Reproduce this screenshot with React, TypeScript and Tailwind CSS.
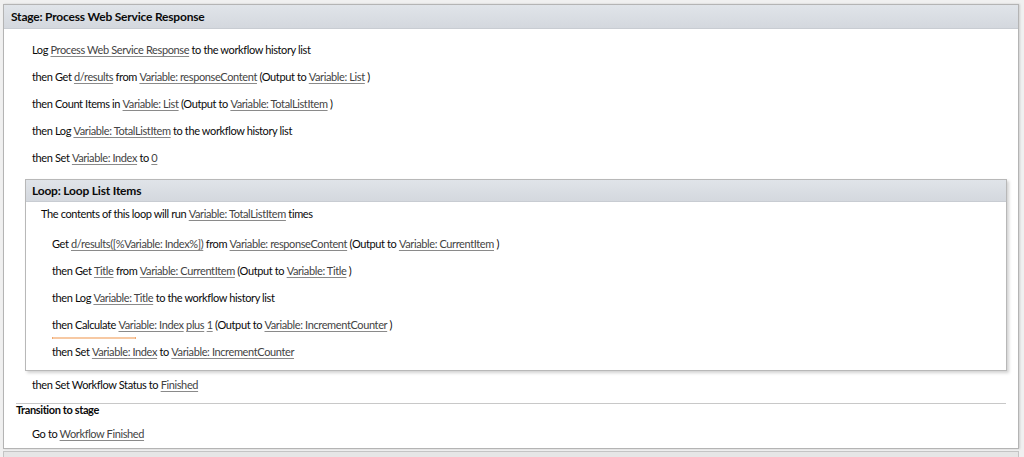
import React from "react";

const L = ({ children }: { children: React.ReactNode }) => (
  <span className="text-[#444] underline decoration-[#8a8a8a] underline-offset-2">{children}</span>
);

const Row = ({ children, className = "" }: { children: React.ReactNode; className?: string }) => (
  <div className={`h-[27px] shrink-0 flex items-center whitespace-nowrap ${className}`}>{children}</div>
);

export default function App() {
  return (
    <div className="w-[1024px] h-[457px] overflow-hidden bg-[#f0f0f0] text-[#0a0a0a] text-[11px] tracking-[-0.38px] [font-family:Lato,'Open_Sans',sans-serif]">
      <div className="pt-[4px] pl-[3px] pr-[5px]">
        <div className="w-[1016px] h-[445px] bg-white border border-[#b4b4b4] shadow-[1px_0_2px_rgba(0,0,0,0.15)] flex flex-col">
          <div className="h-[24px] shrink-0 bg-gradient-to-b from-[#e0e4e9] to-[#d4d8de] border-b border-[#c8ccd2] flex items-center pl-[7px] font-bold text-[12px] tracking-[-0.2px]">
            Stage: Process Web Service Response
          </div>
          <div className="pl-[28px] pt-[8px] shrink-0">
            <Row>Log&nbsp;<L>Process Web Service Response</L>&nbsp;to the workflow history list</Row>
            <Row>then Get&nbsp;<L>d/results</L>&nbsp;from&nbsp;<L>Variable: responseContent</L>&nbsp;(Output to&nbsp;<L>Variable: List</L>&nbsp;)</Row>
            <Row>then Count Items in&nbsp;<L>Variable: List</L>&nbsp;(Output to&nbsp;<L>Variable: TotalListItem</L>&nbsp;)</Row>
            <Row>then Log&nbsp;<L>Variable: TotalListItem</L>&nbsp;to the workflow history list</Row>
            <Row>then Set&nbsp;<L>Variable: Index</L>&nbsp;to&nbsp;<L>0</L></Row>
          </div>
          <div className="ml-[21px] mr-[11px] mt-[7px] h-[192px] shrink-0 border border-[#b8b8b8] shadow-[2px_2px_3px_rgba(0,0,0,0.18)] bg-white">
            <div className="h-[22px] bg-gradient-to-b from-[#e0e4e9] to-[#d4d8de] border-b border-[#c8ccd2] flex items-center pl-[6px] font-bold text-[12px] tracking-[-0.2px]">
              Loop: Loop List Items
            </div>
            <div className="pl-[15px] h-[24px] flex items-center whitespace-nowrap">
              The contents of this loop will run&nbsp;<L>Variable: TotalListItem</L>&nbsp;times
            </div>
            <div className="pl-[26px] pt-[5px]">
              <Row>Get&nbsp;<L>d/results([%Variable: Index%])</L>&nbsp;from&nbsp;<L>Variable: responseContent</L>&nbsp;(Output to&nbsp;<L>Variable: CurrentItem</L>&nbsp;)</Row>
              <Row>then Get&nbsp;<L>Title</L>&nbsp;from&nbsp;<L>Variable: CurrentItem</L>&nbsp;(Output to&nbsp;<L>Variable: Title</L>&nbsp;)</Row>
              <Row>then Log&nbsp;<L>Variable: Title</L>&nbsp;to the workflow history list</Row>
              <div className="relative">
                <Row>then Calculate&nbsp;<L>Variable: Index</L>&nbsp;<L>plus</L>&nbsp;<L>1</L>&nbsp;(Output to&nbsp;<L>Variable: IncrementCounter</L>&nbsp;)</Row>
                <div className="absolute left-0 top-[25px] w-[84px] h-[2px] bg-[#f7c9a3] border-x border-[#f0a870]" />
              </div>
              <Row>then Set&nbsp;<L>Variable: Index</L>&nbsp;to&nbsp;<L>Variable: IncrementCounter</L></Row>
            </div>
          </div>
          <div className="pl-[28px] shrink-0">
            <Row className="h-[29px]">then Set Workflow Status to&nbsp;<L>Finished</L></Row>
          </div>
          <div className="mx-[12px] mt-[3px] shrink-0 border-t border-[#c8c8c8]" />
          <div className="pl-[12px] h-[12px] shrink-0 flex items-center font-bold">Transition to stage</div>
          <div className="pl-[28px] pt-[11px] h-[31px] shrink-0 whitespace-nowrap leading-[14px]">
            Go to&nbsp;<L>Workflow Finished</L>
          </div>
        </div>
        <div className="mt-[2px] h-[10px] bg-[#e6e6e6] border border-[#c4c4c4]" />
      </div>
    </div>
  );
}
